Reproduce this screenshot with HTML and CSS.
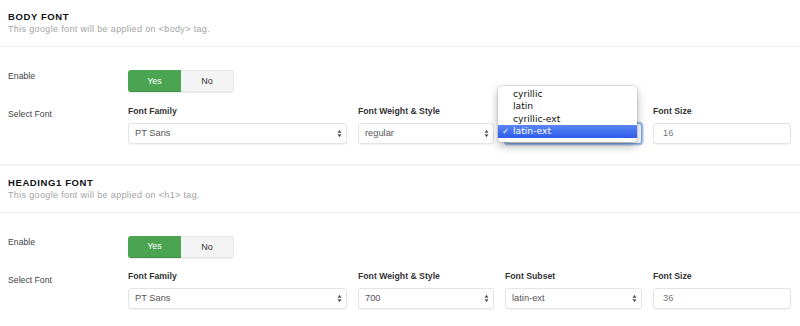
FILE: index.html
```html
<!DOCTYPE html>
<html>
<head>
<meta charset="utf-8">
<link rel="stylesheet" href="styles.css">
</head>
<body>
<div class="page">
  <section class="section">
    <div class="section-head">
      <h2 class="title">BODY FONT</h2>
      <p class="subtitle">This google font will be applied on &lt;body&gt; tag.</p>
    </div>
    <div class="section-body">
      <div class="row">
        <div class="row-label">Enable</div>
        <div class="toggle"><span class="toggle-btn on">Yes</span><span class="toggle-btn off">No</span></div>
      </div>
      <div class="row row-font">
        <div class="row-label pad">Select Font</div>
        <div class="fields">
          <div class="field">
            <div class="field-label">Font Family</div>
            <div class="select">PT Sans<svg class="arrows" width="5" height="9" viewBox="0 0 5 9"><path d="M0.5 3.8 L2.5 0.8 L4.5 3.8Z M0.5 5.2 L2.5 8.2 L4.5 5.2Z"/></svg></div>
          </div>
          <div class="field">
            <div class="field-label">Font Weight &amp; Style</div>
            <div class="select">regular<svg class="arrows" width="5" height="9" viewBox="0 0 5 9"><path d="M0.5 3.8 L2.5 0.8 L4.5 3.8Z M0.5 5.2 L2.5 8.2 L4.5 5.2Z"/></svg></div>
          </div>
          <div class="field field-open">
            <div class="field-label">Font Subset</div>
            <div class="select focused">latin-ext<svg class="arrows" width="5" height="9" viewBox="0 0 5 9"><path d="M0.5 3.8 L2.5 0.8 L4.5 3.8Z M0.5 5.2 L2.5 8.2 L4.5 5.2Z"/></svg></div>
            <ul class="menu">
              <li class="menu-item">cyrillic</li>
              <li class="menu-item">latin</li>
              <li class="menu-item">cyrillic-ext</li>
              <li class="menu-item selected"><span class="check">✓</span>latin-ext</li>
            </ul>
          </div>
          <div class="field">
            <div class="field-label">Font Size</div>
            <div class="input">16</div>
          </div>
        </div>
      </div>
    </div>
  </section>

  <section class="section">
    <div class="section-head">
      <h2 class="title">HEADING1 FONT</h2>
      <p class="subtitle">This google font will be applied on &lt;h1&gt; tag.</p>
    </div>
    <div class="section-body">
      <div class="row">
        <div class="row-label">Enable</div>
        <div class="toggle"><span class="toggle-btn on">Yes</span><span class="toggle-btn off">No</span></div>
      </div>
      <div class="row row-font">
        <div class="row-label pad">Select Font</div>
        <div class="fields">
          <div class="field">
            <div class="field-label">Font Family</div>
            <div class="select">PT Sans<svg class="arrows" width="5" height="9" viewBox="0 0 5 9"><path d="M0.5 3.8 L2.5 0.8 L4.5 3.8Z M0.5 5.2 L2.5 8.2 L4.5 5.2Z"/></svg></div>
          </div>
          <div class="field">
            <div class="field-label">Font Weight &amp; Style</div>
            <div class="select">700<svg class="arrows" width="5" height="9" viewBox="0 0 5 9"><path d="M0.5 3.8 L2.5 0.8 L4.5 3.8Z M0.5 5.2 L2.5 8.2 L4.5 5.2Z"/></svg></div>
          </div>
          <div class="field">
            <div class="field-label">Font Subset</div>
            <div class="select">latin-ext<svg class="arrows" width="5" height="9" viewBox="0 0 5 9"><path d="M0.5 3.8 L2.5 0.8 L4.5 3.8Z M0.5 5.2 L2.5 8.2 L4.5 5.2Z"/></svg></div>
          </div>
          <div class="field">
            <div class="field-label">Font Size</div>
            <div class="input">36</div>
          </div>
        </div>
      </div>
    </div>
  </section>
</div>
</body>
</html>
```
FILE: styles.css
```css
html, body {
  margin: 0;
  padding: 0;
  background: #ffffff;
}

body {
  font-family: "Liberation Sans", Arial, sans-serif;
  color: #333333;
  overflow: hidden;
}

.page {
  width: 800px;
}

.section {
  border-bottom: 2px solid #f3f3f3;
}

.section-head {
  padding: 11px 8px 11px;
  border-bottom: 1px solid #efefef;
}

.title {
  margin: 0;
  font-size: 9.5px;
  line-height: 12px;
  font-weight: bold;
  letter-spacing: 0.6px;
  color: #111111;
}

.subtitle {
  margin: 0;
  font-size: 9px;
  line-height: 12px;
  letter-spacing: 0.35px;
  color: #a3a3a3;
}

.section-body {
  padding: 23px 9px 20px 8px;
}

.row {
  display: flex;
  align-items: flex-start;
}

.row-font {
  margin-top: 12.5px;
}

.row-label {
  width: 120px;
  flex: none;
  font-size: 8.7px;
  line-height: 12px;
  color: #444444;
}

.row-label.pad {
  padding-top: 3.5px;
}

.toggle {
  display: flex;
  height: 22px;
  border-radius: 3px;
  box-shadow: 0 1px 1px rgba(0, 0, 0, 0.08);
}

.toggle-btn {
  box-sizing: border-box;
  width: 53px;
  height: 22px;
  display: flex;
  align-items: center;
  justify-content: center;
  font-size: 9px;
}

.toggle-btn.on {
  background: #4ba452;
  color: #ffffff;
  border-radius: 3px 0 0 3px;
  border-bottom: 1px solid #3f9045;
}

.toggle-btn.off {
  background: #f4f4f4;
  color: #333333;
  border: 1px solid #e6e6e6;
  border-left: none;
  border-radius: 0 3px 3px 0;
}

.fields {
  display: grid;
  grid-template-columns: 219px 136px 137px 138px;
  column-gap: 11px;
}

.field {
  display: flex;
  flex-direction: column;
}

.field-open {
  position: relative;
}

.field-label {
  font-size: 8.7px;
  line-height: 12.5px;
  font-weight: bold;
  color: #333333;
  margin-bottom: 5.5px;
}

.select,
.input {
  box-sizing: border-box;
  height: 21px;
  border: 1px solid #e4e4e4;
  border-radius: 3px;
  box-shadow: 0 1px 1px rgba(0, 0, 0, 0.05);
  font-size: 9.3px;
  line-height: 19px;
  color: #555555;
  background: #ffffff;
}

.select {
  display: flex;
  align-items: center;
  justify-content: space-between;
  padding: 0 4px 0 6px;
}

.select.focused {
  border-color: #78a7e3;
  box-shadow: 0 0 0 1.5px rgba(100, 150, 225, 0.55);
}

.arrows {
  fill: #555555;
  flex: none;
}

.input {
  padding: 0 9px;
  color: #777777;
}

.menu {
  position: absolute;
  left: -7px;
  top: -18.5px;
  width: 139px;
  margin: 0;
  padding: 1.5px 0 4.5px;
  list-style: none;
  background: #ffffff;
  border-radius: 4px;
  box-shadow: 0 0 0 0.5px rgba(0, 0, 0, 0.18), 0 4px 10px rgba(0, 0, 0, 0.3);
  font-family: "DejaVu Sans", sans-serif;
  font-size: 9.2px;
  color: #111111;
  z-index: 2;
}

.menu-item {
  position: relative;
  height: 12.5px;
  line-height: 12.5px;
  padding-left: 15px;
}

.menu-item.selected {
  background: linear-gradient(#5a86f6, #2f5ce9);
  color: #ffffff;
}

.check {
  position: absolute;
  left: 4px;
  top: 0;
  font-size: 8.5px;
}
```
